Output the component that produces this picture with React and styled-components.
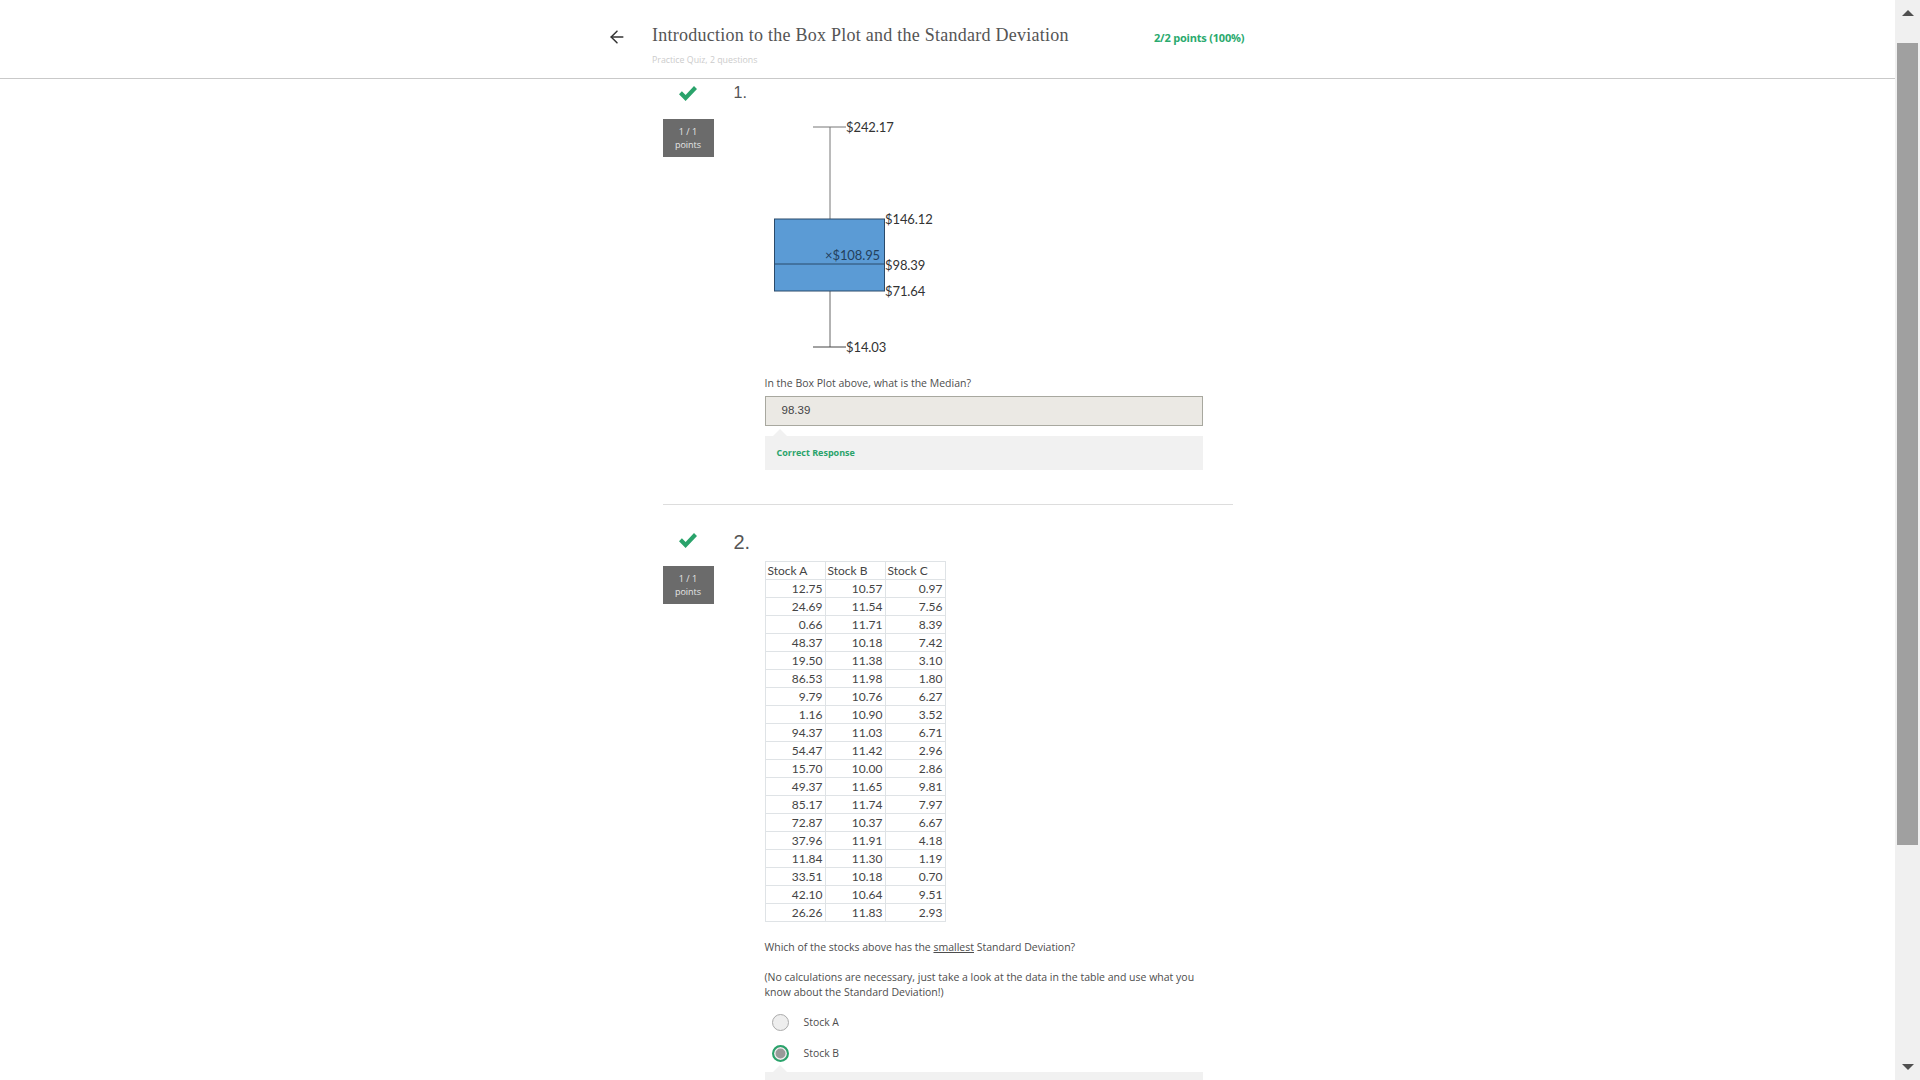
import React from "react";
import styled, { createGlobalStyle } from "styled-components";
import { ArrowLeft } from "lucide-react";

const Global = createGlobalStyle`
  html, body { margin: 0; padding: 0; height: 100%; overflow: hidden; background: #fff; }
  * { box-sizing: border-box; }
`;

const Shell = styled.div`
  display: flex;
  height: 1080px;
  overflow: hidden;
  font-family: "Open Sans", sans-serif;
  color: #444;
`;
const Page = styled.div`
  flex: 1;
  min-width: 0;
  display: flex;
  flex-direction: column;
  overflow: hidden;
`;
const Header = styled.header`
  flex: none;
  height: 79px;
  padding-left: 607px;
  border-bottom: 1px solid #c9c9c9;
  display: flex;
  align-items: flex-start;
`;
const BackIcon = styled(ArrowLeft)`
  flex: none;
  width: 20px;
  height: 20px;
  margin-top: 27px;
  color: #333;
`;
const TitleBlock = styled.div`
  width: 502px;
  margin-left: 25px;
  padding-top: 24px;
`;
const Title = styled.h1`
  margin: 0;
  font-family: "Liberation Serif", serif;
  font-weight: 400;
  font-size: 18px;
  line-height: 22px;
  letter-spacing: 0.25px;
  color: #555;
`;
const Subtitle = styled.div`
  margin-top: 8px;
  font-size: 8.8px;
  line-height: 12px;
  color: #ccc;
`;
const Points = styled.div`
  margin-top: 31px;
  font-size: 11px;
  line-height: 14px;
  font-weight: 700;
  letter-spacing: -0.2px;
  color: #2aaa6e;
`;
const Column = styled.main`
  width: 570px;
  margin: 0 auto;
  flex: none;
`;
const Question = styled.section`
  display: flex;
  padding-top: ${(p) => p.$top}px;
`;
const Rail = styled.div`
  flex: none;
  width: 51px;
  display: flex;
  flex-direction: column;
  align-items: center;
`;
const CheckSlot = styled.div`
  height: 20px;
  display: flex;
  align-items: center;
  color: #2aa36b;
`;
const CheckMark = styled.svg`
  display: block;
  width: 18px;
  height: 15px;
  fill: currentColor;
`;
const Badge = styled.div`
  margin-top: 16px;
  width: 51px;
  height: 38px;
  padding-top: 6px;
  background: #6b6b6b;
  color: #e6e6e6;
  text-align: center;
  font-size: 9px;
  line-height: 13px;
`;
const Main = styled.div`
  flex: 1;
  margin-left: 20px;
`;
const QuestionNumber = styled.div`
  height: 20px;
  font-family: "Liberation Sans", sans-serif;
  font-size: ${(p) => p.$size}px;
  line-height: ${(p) => p.$line}px;
  color: #555;
`;
const Body = styled.div`
  padding-left: 31px;
  width: 469px;
`;
const Chart = styled.svg`
  display: block;
  margin-top: 16px;
  width: 300px;
  height: 257px;
  text {
    font-family: Lato, sans-serif;
    font-size: 13px;
    letter-spacing: -0.1px;
    fill: #333;
    dominant-baseline: central;
  }
`;
const Prompt = styled.p`
  margin: ${(p) => p.$top || 0}px 0 0;
  font-size: 10.5px;
  line-height: 15px;
  color: #4d4d4d;
  u { text-decoration: underline; }
`;
const Answer = styled.div`
  margin-top: 5px;
  height: 30px;
  padding-left: 16px;
  background: #ebe9e4;
  border: 1px solid #a8a89f;
  font-family: "Liberation Sans", sans-serif;
  font-size: 11.5px;
  line-height: 27px;
  color: #444;
`;
const Feedback = styled.div`
  position: relative;
  margin-top: ${(p) => p.$top}px;
  height: 34px;
  padding: 9px 11px 9px 12px;
  background: #f1f1f1;
  font-size: 9px;
  line-height: 16px;
  font-weight: 700;
  color: #2aa36b;
  &::before {
    content: "";
    position: absolute;
    left: 8px;
    top: -7px;
    border-left: 7px solid transparent;
    border-right: 7px solid transparent;
    border-bottom: 7px solid #f1f1f1;
  }
`;
const Divider = styled.hr`
  margin: 34px 0 0;
  border: 0;
  border-top: 1px solid #ddd;
`;
const DataTable = styled.table`
  margin-top: 11px;
  border-collapse: collapse;
  table-layout: fixed;
  width: 180px;
  font-family: Lato, sans-serif;
  font-size: 12px;
  color: #444;
  td, th {
    width: 60px;
    height: 18px;
    padding: 0 2px;
    border: 1px solid #dfe3e6;
    font-weight: 400;
    line-height: 16px;
  }
  th { text-align: left; }
  td { text-align: right; }
`;
const Options = styled.div`
  margin-top: 14px;
  display: flex;
  flex-direction: column;
  gap: 15px;
`;
const Option = styled.label`
  display: flex;
  align-items: center;
  height: 16px;
  padding-left: 7px;
  font-size: 10.4px;
  color: #4d4d4d;
`;
const Radio = styled.span`
  flex: none;
  width: 17px;
  height: 17px;
  margin-right: 15px;
  border-radius: 50%;
  background: ${(p) => (p.$on ? "#999" : "#eee")};
  border: ${(p) => (p.$on ? "2px solid #2aa36b" : "1px solid #aaa")};
  box-shadow: ${(p) => (p.$on ? "inset 0 0 0 1.5px #eee" : "none")};
`;
const Scrollbar = styled.aside`
  flex: none;
  width: 25px;
  height: 100%;
  background: #f0f0f0;
  display: flex;
  flex-direction: column;
  align-items: center;
  padding: 10px 0 10px;
`;
const Arrow = styled.div`
  flex: none;
  width: 0;
  height: 0;
  border-left: 6px solid transparent;
  border-right: 6px solid transparent;
  ${(p) => (p.$down ? "border-top: 6px solid #505050;" : "border-bottom: 6px solid #505050;")}
`;
const Thumb = styled.div`
  flex: none;
  width: 21px;
  height: 802px;
  margin-top: 27px;
  background: #a0a0a0;
`;
const Spacer = styled.div`
  flex: 1;
`;

const rows = [
  ["12.75", "10.57", "0.97"],
  ["24.69", "11.54", "7.56"],
  ["0.66", "11.71", "8.39"],
  ["48.37", "10.18", "7.42"],
  ["19.50", "11.38", "3.10"],
  ["86.53", "11.98", "1.80"],
  ["9.79", "10.76", "6.27"],
  ["1.16", "10.90", "3.52"],
  ["94.37", "11.03", "6.71"],
  ["54.47", "11.42", "2.96"],
  ["15.70", "10.00", "2.86"],
  ["49.37", "11.65", "9.81"],
  ["85.17", "11.74", "7.97"],
  ["72.87", "10.37", "6.67"],
  ["37.96", "11.91", "4.18"],
  ["11.84", "11.30", "1.19"],
  ["33.51", "10.18", "0.70"],
  ["42.10", "10.64", "9.51"],
  ["26.26", "11.83", "2.93"],
];

function Check() {
  return (
    <CheckMark viewBox="0 0 18 15">
      <path d="M0 8.2 2.9 5.2 6.6 9 15 0l3 3L6.6 15z" />
    </CheckMark>
  );
}

function BoxPlot() {
  return (
    <Chart viewBox="0 0 300 257">
      <line x1="48" x2="81" y1="8" y2="8" stroke="#777" />
      <line x1="65" x2="65" y1="8" y2="100" stroke="#777" />
      <line x1="65" x2="65" y1="172" y2="228" stroke="#666" />
      <line x1="48" x2="81" y1="228" y2="228" stroke="#444" />
      <rect x="9.5" y="100" width="110" height="72" fill="#5b9bd5" stroke="#2a4a6a" />
      <line x1="9.5" x2="119.5" y1="145" y2="145" stroke="#2a4a6a" />
      <text x="81" y="8">$242.17</text>
      <text x="120" y="100">$146.12</text>
      <text x="60" y="136" style={{ fill: "#23405c" }}>×$108.95</text>
      <text x="120" y="146">$98.39</text>
      <text x="120" y="172">$71.64</text>
      <text x="81" y="228">$14.03</text>
    </Chart>
  );
}

export default function App() {
  return (
    <>
      <Global />
      <Shell>
        <Page>
          <Header>
            <BackIcon strokeWidth={1.8} />
            <TitleBlock>
              <Title>Introduction to the Box Plot and the Standard Deviation</Title>
              <Subtitle>Practice Quiz, 2 questions</Subtitle>
            </TitleBlock>
            <Points>2/2 points (100%)</Points>
          </Header>
          <Column>
            <Question $top={4}>
              <Rail>
                <CheckSlot><Check /></CheckSlot>
                <Badge>1 / 1<br />points</Badge>
              </Rail>
              <Main>
                <QuestionNumber $size={16} $line={20}>1.</QuestionNumber>
                <Body>
                  <BoxPlot />
                  <Prompt>In the Box Plot above, what is the Median?</Prompt>
                  <Answer>98.39</Answer>
                  <Feedback $top={10}>Correct Response</Feedback>
                </Body>
              </Main>
            </Question>
            <Divider />
            <Question $top={25}>
              <Rail>
                <CheckSlot><Check /></CheckSlot>
                <Badge>1 / 1<br />points</Badge>
              </Rail>
              <Main>
                <QuestionNumber $size={20} $line={24}>2.</QuestionNumber>
                <Body>
                  <DataTable>
                    <thead>
                      <tr><th>Stock A</th><th>Stock B</th><th>Stock C</th></tr>
                    </thead>
                    <tbody>
                      {rows.map((r) => (
                        <tr key={r[0]}>{r.map((c, i) => <td key={i}>{c}</td>)}</tr>
                      ))}
                    </tbody>
                  </DataTable>
                  <Prompt $top={18}>Which of the stocks above has the <u>smallest</u> Standard Deviation?</Prompt>
                  <Prompt $top={15}>(No calculations are necessary, just take a look at the data in the table and use what you know about the Standard Deviation!)</Prompt>
                  <Options>
                    <Option><Radio />Stock A</Option>
                    <Option><Radio $on />Stock B</Option>
                  </Options>
                  <Feedback $top={11} />
                </Body>
              </Main>
            </Question>
          </Column>
        </Page>
        <Scrollbar>
          <Arrow />
          <Thumb />
          <Spacer />
          <Arrow $down />
        </Scrollbar>
      </Shell>
    </>
  );
}
